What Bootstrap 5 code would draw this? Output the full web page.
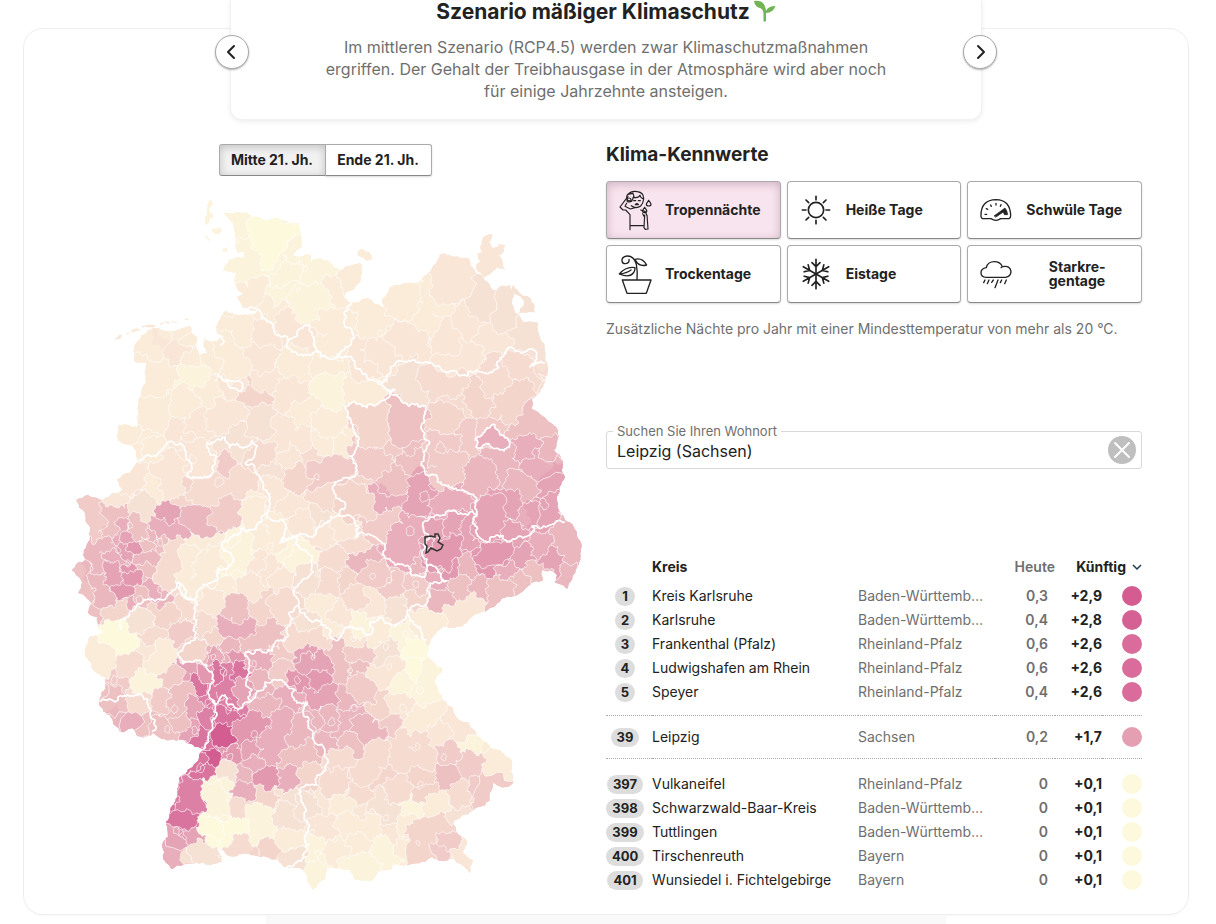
<!DOCTYPE html>
<html lang="de">
<head>
<meta charset="utf-8">
<meta name="viewport" content="width=device-width, initial-scale=1">
<title>Klimaszenarien für Deutschland</title>
<link href="https://cdn.jsdelivr.net/npm/bootstrap@5.3.0/dist/css/bootstrap.min.css" rel="stylesheet">
<style>
body{font-family:Inter,"Liberation Sans",sans-serif;color:#222;background:#fff;font-size:14px;padding:0 27px 0 23px;overflow-x:hidden}
.panel{border:1px solid #eee;border-radius:20px;margin-top:28px;padding-bottom:14px;box-shadow:0 1px 2px rgba(0,0,0,.03)}
.slide{max-width:752px;margin-top:-29px;padding:0 80px 17px;border:1px solid #f1f1f1;border-top:0;border-radius:0 0 12px 12px;box-shadow:0 2px 5px rgba(0,0,0,.07)}
.slide h2{font-size:21px;line-height:24px;font-weight:700;margin-bottom:12px}
.slide p{font-size:16px;line-height:22px;color:#6f6f6f;max-width:580px}
.arrow{position:absolute;top:35px;width:34px;height:34px;border-radius:50%;border:1px solid #aaa;background:#fff;box-shadow:0 1px 2px rgba(0,0,0,.3)}
.arrow-prev{left:-16px}.arrow-next{right:-16px}
.main-grid{padding-top:24px}
.map-side{padding:0 16px 0 36px}
.data-side{padding-right:46px}
.switch .btn{width:107px;height:32px;border:1px solid #aaa;border-bottom-color:#888;border-radius:3px;font-size:14px;line-height:20px;font-weight:700;color:#222;padding:0;background:#fff;box-shadow:0 1px 2px rgba(0,0,0,.15)}
.switch .btn.active{background:#f1f1f1;box-shadow:inset 0 2px 8px rgba(0,0,0,.2)}
.map{margin-top:14px;width:100%}
h3.section-title{font-size:19px;line-height:22px;font-weight:700;margin-bottom:15px}
.tiles{display:grid;grid-template-columns:repeat(3,1fr);gap:6px}
.tile{height:58px;border:1px solid #aaa;border-bottom-color:#888;border-radius:4px;background:#fff;padding:0 7px;color:#222;font-size:14px;line-height:14px;font-weight:700;box-shadow:0 1px 2px rgba(0,0,0,.15)}
.tile.active{background:#f8e4ee;box-shadow:inset 0 2px 10px rgba(60,0,30,.22),0 1px 2px rgba(0,0,0,.15)}
.tile-icon{width:42px;margin-right:9px;flex:none;display:flex;justify-content:center}
.tile-icon svg,.arrow svg,.reset svg{fill:none;stroke:#222;stroke-linecap:round;stroke-linejoin:round}
.tile-text{margin:0 auto;padding-right:6px}
.hint{font-size:14px;line-height:20px;color:#6f6f6f;margin:16px 0 84px}
.place{border:1px solid #d8d8d8;border-radius:3px;padding:0 5px 0 10px;height:46px;margin-bottom:86px}
.place legend{float:none;width:auto;font-size:13px;line-height:16px;color:#6f6f6f;padding:0 4px;margin:0 0 0 -4px}
.place-row{margin-top:-3px}
.place input{border:0;outline:0;background:none;font-size:16px;line-height:20px;color:#222;padding:2px 0 0;width:100%}
.reset{border:0;padding:0;width:28px;height:28px;border-radius:50%;background:#bfbfbf;flex:none}
.reset svg{stroke:#fff}
.rank{table-layout:fixed;width:100%;line-height:24px}
.rank td,.rank th{padding:0;white-space:nowrap;height:24px}
.rank th{height:29px;padding-bottom:5px;font-weight:700}
.rank .state{color:#6f6f6f}
.rank .now{color:#6f6f6f;font-weight:600;text-align:right;padding-right:7px}
.rank th.now{padding-right:0}
.rank .next{font-weight:700;text-align:right}
.rank .place-no{text-align:center;padding-right:8px;line-height:0;vertical-align:middle}
.pill{display:inline-block;background:#ddd;border-radius:10px;font-size:13px;line-height:19px;min-width:20px;padding:0 6px;font-weight:700}
.dot{display:block;width:20px;height:20px;border-radius:50%;margin-left:auto}
.own td{border-top:1px dotted #aaa;border-bottom:1px dotted #aaa;height:43px}
.rank .group-end td{padding-bottom:11px}
.rank .group-start td{padding-top:13px}
.sort{border:0;background:none;padding:0;font-weight:700;color:#222;display:inline-flex;align-items:center;gap:6px}
.next-part{max-width:680px;height:10px;background:#f9f9f9}
</style>
</head>
<body>
<main class="panel">
  <header class="slide position-relative bg-white mx-auto text-center">
    <h2 class="d-flex justify-content-center gap-1">Szenario mäßiger Klimaschutz
      <svg width="22" height="22" viewBox="0 0 22 22" aria-hidden="true"><path d="M9.500 21V13Q9 9 6 8 1 7 0 1 9 0 11 6.500 12 9 12 11 14 6 21.500 6 19 13 12 13V21Q11 22.500 9.500 21Z" fill="#70b455"/></svg></h2>
    <p class="mx-auto mb-0">Im mittleren Szenario (RCP4.5) werden zwar Klimaschutzmaßnahmen ergriffen. Der Gehalt der Treibhausgase in der Atmosphäre wird aber noch für einige Jahrzehnte ansteigen.</p>
    <button class="arrow arrow-prev d-flex align-items-center justify-content-center p-0" type="button" aria-label="Vorheriges Szenario"><svg width="16" height="16" stroke-width="2" viewBox="0 0 16 16"><path d="M10 2 4 8l6 6"/></svg></button>
    <button class="arrow arrow-next d-flex align-items-center justify-content-center p-0" type="button" aria-label="Nächstes Szenario"><svg width="16" height="16" stroke-width="2" viewBox="0 0 16 16"><path d="m6 2 6 6-6 6"/></svg></button>
  </header>

  <div class="row g-0 main-grid">
    <div class="col-6 map-side">
      <div class="text-center"><div class="btn-group switch" role="group" aria-label="Zeitraum">
        <button class="btn active" type="button">Mitte 21. Jh.</button>
        <button class="btn" type="button">Ende 21. Jh.</button>
      </div></div>
      <svg class="map d-block" id="map" viewBox="60 190 530 710" role="img" aria-label="Karte der Kreise in Deutschland"></svg>
    </div>

    <div class="col-6 data-side">
      <h3 class="section-title">Klima-Kennwerte</h3>
      <div class="tiles">
        <button class="tile active d-flex align-items-center text-start" type="button"><span class="tile-icon"><svg width="34" height="41" viewBox="54 57 102 123" stroke-width="3.5"><path d="M84 76 60 108l9 9h8l13 14v45M80 97l-5 9 16 8 14-4M122 117l14 5 5 12M91 164h41M134 132l-2 38 4 5 8-1-3-42M128 128l4 8"/><path d="M84 70q11-12 28-8 20 3 19 22-1 12-9 21-14 10-28-1M83 70l16-3 3 9-7 15-12-3-3-12zM99 79q17 3 21-6 2 8 9 10M101 89h6M115 89h6M106 101q5-6 9 0z"/><circle cx="87" cy="87" r="6"/><path d="M146 88q-14 17 0 17t0-17M134 109q-13 16 0 16t0-16"/></svg></span>Tropennächte</button>
        <button class="tile d-flex align-items-center text-start" type="button"><span class="tile-icon"><svg width="30" height="30" viewBox="0 0 90 90" stroke-width="5"><circle cx="45" cy="45" r="23"/><path d="M45 4v10M45 76v10M4 45h11M75 45h11M15 15l8 8M67 67l8 8M15 75l8-8M67 23l8-8"/></svg></span>Heiße Tage</button>
        <button class="tile d-flex align-items-center text-start" type="button"><span class="tile-icon"><svg width="32" height="24" viewBox="300 84 96 72" stroke-width="4"><path d="M307 146q-5-3-4-10 0-46 45-47 43 1 44 48 0 6-5 9h-25q-14 10-29 0z"/><path d="M315 133h5M319 116l4 2M332 105l2 4M348 100v5M363 104l-2 5"/><path d="M343 137l32-23q7 8 8 20h-10l-3-8-22 15z" fill="#222" stroke-width="2"/></svg></span>Schwüle Tage</button>
        <button class="tile d-flex align-items-center text-start" type="button"><span class="tile-icon"><svg width="34" height="41" viewBox="54 250 102 123" stroke-width="4"><path d="M67 328h86l-14 40H81zM111 326q2-24-2-45-7-26-28-25-17 3-15 15 2 9 11 8 12-2 10-13M105 266q22-6 35 17-23 6-33-13M105 291q-26-5-47 19 34 14 45-8 2-5 2-11M58 310q22-2 35-12"/></svg></span>Trockentage</button>
        <button class="tile d-flex align-items-center text-start" type="button"><span class="tile-icon"><svg width="30" height="32" viewBox="0 0 90 96" stroke-width="5"><path id="arm" d="M45 48V4M45 26 33 14M45 26 57 14"/><use href="#arm" transform="rotate(60 45 48)"/><use href="#arm" transform="rotate(120 45 48)"/><use href="#arm" transform="rotate(180 45 48)"/><use href="#arm" transform="rotate(240 45 48)"/><use href="#arm" transform="rotate(300 45 48)"/></svg></span>Eistage</button>
        <button class="tile d-flex align-items-center text-start" type="button"><span class="tile-icon"><svg width="34" height="29" viewBox="296 271 102 87" stroke-width="4"><path d="M317 323q-15-1-15-14 0-12 16-15 4-18 24-18 18 0 24 15 24-5 26 15-1 15-16 17zM366 291l-4 3M314 331l-4 8M326 331l-5 11M339 331l-5 7M353 331l-9 23M364 331l-4 8M378 331l-5 11"/></svg></span><span class="tile-text">Starkre-<br>gentage</span></button>
      </div>
      <p class="hint">Zusätzliche Nächte pro Jahr mit einer Mindesttemperatur von mehr als 20 °C.</p>
      <fieldset class="place">
        <legend><label for="ort">Suchen Sie Ihren Wohnort</label></legend>
        <div class="place-row d-flex align-items-center"><input id="ort" type="text" value="Leipzig (Sachsen)"><button class="reset" type="button" aria-label="Eingabe löschen"><svg class="d-block" width="28" height="28" stroke-width="2" viewBox="0 0 28 28"><path d="m7 7 14 14M21 7 7 21"/></svg></button></div>
      </fieldset>
      <table class="rank">
        <colgroup><col style="width:46px"><col><col style="width:137px"><col style="width:60px"><col style="width:47px"><col style="width:40px"></colgroup>
        <thead><tr><th></th><th>Kreis</th><th></th><th class="now">Heute</th><th colspan="2" class="next"><button class="sort" type="button">Künftig<svg width="10" height="7" viewBox="0 0 10 7" fill="none" stroke="#1d3a55" stroke-width="1.5"><path d="m1 1 4 4 4-4"/></svg></button></th></tr></thead>
        <tbody id="rows"></tbody>
      </table>
    </div>
  </div>
</main>
<div class="next-part mx-auto"></div>

<script>
// Ranking: place, district, state, today, future, colour
const ranking = [
 [1,'Kreis Karlsruhe','Baden-Württemb…','0,3','+2,9','#d45c91'],
 [2,'Karlsruhe','Baden-Württemb…','0,4','+2,8','#d56094'],
 [3,'Frankenthal (Pfalz)','Rheinland-Pfalz','0,6','+2,6','#d96c9b'],
 [4,'Ludwigshafen am Rhein','Rheinland-Pfalz','0,6','+2,6','#d96c9b'],
 [5,'Speyer','Rheinland-Pfalz','0,4','+2,6','#d96c9b','group-end'],
 [39,'Leipzig','Sachsen','0,2','+1,7','#e59fb3','own'],
 [397,'Vulkaneifel','Rheinland-Pfalz','0','+0,1','#fdf9dc','group-start'],
 [398,'Schwarzwald-Baar-Kreis','Baden-Württemb…','0','+0,1','#fdf9dc'],
 [399,'Tuttlingen','Baden-Württemb…','0','+0,1','#fdf9dc'],
 [400,'Tirschenreuth','Bayern','0','+0,1','#fdf9dc'],
 [401,'Wunsiedel i. Fichtelgebirge','Bayern','0','+0,1','#fdf9dc']];
document.getElementById('rows').innerHTML = ranking.map(r =>
 `<tr class="${r[6]||''}"><td class="place-no"><span class="pill">${r[0]}</span></td><td>${r[1]}</td><td class="state">${r[2]}</td><td class="now">${r[3]}</td><td class="next">${r[4]}</td><td><span class="dot" style="background:${r[5]}"></span></td></tr>`).join('');

// Colour scale, low to high
const scale = {a:'#fdf9dc',b:'#fcf3dc',c:'#faecd9',d:'#f9e6d7',e:'#f6e2d5',f:'#f6dbd0',g:'#f4d5cc',h:'#f1cbc8',i:'#edc0c2',j:'#eab7bf',k:'#e8aebb',l:'#e5a4b5',m:'#e299b0',n:'#dd80a5',o:'#d9749f',p:'#d35c91'};
const pts = s => s.trim().split(/\s+/).map(p => p.split(',').map(Number));

const coast = pts(`224,213 247,213 252,217 267,221 277,218 290,224 298,223 301,233 302,240 301,248 293,255 310,254 311,262 320,258 330,262 340,270 350,266 360,263 361,280 345,293 344,298 350,302 368,298 375,304 383,307 383,298 390,287 400,285 417,283 430,272 440,254 463,258 469,258 475,272 485,280 493,290 510,285 514,294 512,304 515,313 523,322 538,323 540,337 545,360 548,368 545,382 540,392 532,398 531,408 547,420 558,430 557,442 554,450 563,462 565,477 557,500 565,520 577,532 581,550 575,573 567,589 555,583 557,575 552,571 542,570 543,580 520,593 503,598 496,605 480,613 467,623 443,627 433,637 429,645 427,655 442,668 442,672 435,682 443,700 457,718 468,722 477,735 490,747 500,750 512,760 513,783 507,787 493,783 490,800 478,807 453,823 462,837 467,843 463,853 473,860 470,873 457,863 453,858 443,861 432,857 422,862 393,865 390,870 378,872 373,880 355,880 350,870 327,868 325,880 313,890 307,882 305,873 300,868 287,868 260,857 227,855 217,848 222,862 210,865 183,865 172,869 163,858 168,837 166,822 175,802 179,778 197,762 203,749 187,743 160,738 153,733 150,736 137,736 132,728 120,732 110,715 99,705 100,698 106,677 93,670 86,657 85,650 90,637 103,632 98,627 97,617 88,613 92,603 78,593 82,582 72,570 85,560 83,555 90,540 90,527 85,513 76,500 88,495 103,500 123,490 117,480 138,462 136,452 118,440 117,437 119,425 137,427 138,410 146,383 147,363 134,361 137,342 148,330 190,326 192,333 197,337 195,345 200,355 207,353 204,338 217,342 223,336 217,333 218,322 225,311 242,315 255,314 258,311 242,308 237,297 243,294 235,285 237,273 223,270 228,262 243,258 245,252 237,253 235,237`);

const islands = [
 ['b','211,200 213,203 209,208 210,213 215,216 210,218 207,225 205,222 207,211'],['b','212,229 220,227 222,231 217,234 212,232'],['b','206,234 210,239 209,241 206,238'],['b','222,249 228,247 227,251 223,252'],
 ['c','357,251 362,249 369,252 373,259 367,261 358,256'],
 ['d','477,254 482,252 480,247 482,240 487,235 492,234 489,242 494,248 499,244 505,245 504,252 499,256 503,262 505,270 497,267 493,272 486,277 478,272 476,265 480,262'],['e','511,284 520,293 535,307 535,313 518,314 524,304 514,294'],
 ['d','115,338 122,335 120,339 116,340'],['c','127,333 141,330 140,331 127,335'],['d','142,326 155,325 155,327 142,328'],['d','160,324 169,322 169,324 160,325'],['c','171,321 181,320 180,321 171,322'],['c','184,319 189,319 188,320']];

// One seed per district: x,y,colour
const seeds = `240,230,b 250,250,b 277,237,b 267,255,b 290,228,b 250,290,c 247,262,b 285,270,b 297,250,b 280,287,b 322,272,b 308,305,b 272,308,c 287,327,d 303,342,d 335,290,c 327,322,c 332,342,c
350,277,c 324,297,b 337,327,c 370,317,c 398,292,c 420,310,c 437,300,c 428,325,c 457,275,d 387,347,d 363,357,d 410,340,d 447,333,d 470,323,d 487,340,d 460,355,d 487,303,e 507,310,e 527,337,e 536,350,e 413,383,e 447,387,f 457,403,f 477,397,g 520,367,f 500,377,f 533,380,f 507,407,g 517,395,g 540,420,i 527,433,i 447,423,g 367,423,g 403,417,i 407,437,i 492,437,h 527,450,k 330,390,b 360,390,c 330,423,c 343,443,c 447,443,h 467,440,h
150,345,c 170,337,d 180,350,d 187,335,c 190,355,c 160,373,c 190,373,b 212,357,c 237,330,c 227,350,c 233,367,c 270,333,d 260,353,d 267,377,d 230,383,d 253,392,g 297,363,c 330,364,c 290,393,d 153,403,c 157,423,c 143,445,c 128,433,c 185,403,c 210,393,c 227,417,d 180,433,d 200,423,d 257,420,e 240,437,e 307,417,c 280,437,d 300,445,d
153,452,c 167,467,d 130,477,d 113,493,d 150,493,c 168,488,d 203,463,d 193,455,d 230,453,e 227,468,h 257,457,f 240,483,f 203,490,f 220,483,f 183,495,g 147,510,e 90,507,h 97,525,h 113,513,i 230,510,h 203,523,j 190,518,j 168,517,l 160,527,k 175,527,k 253,510,c 273,530,c 260,535,c 267,473,e 297,473,g 273,493,d 293,507,d 293,453,d 313,457,f 317,475,h 323,493,f 320,513,e 300,520,d 333,470,h 323,443,c
97,537,h 107,530,i 90,550,j 103,543,j 87,570,j 100,560,j 118,533,k 127,537,l 137,530,i 135,550,m 113,557,k 123,550,l 115,565,l 123,563,k 128,558,l 137,560,j 148,557,j 147,549,i 148,537,j 160,543,i 130,567,m 117,580,l 132,577,m 123,590,m 145,570,i 100,587,j 85,593,i 107,600,j 93,610,i 110,615,g 123,603,g 134,603,k 140,598,i 153,590,k 162,592,j 173,547,f 170,563,f 160,573,f 167,583,f 203,540,c 187,557,c 210,556,c 200,573,c 183,575,c 193,590,c 237,553,b 247,543,b 230,570,b 267,567,d 256,560,d 290,550,b 277,540,c 303,560,b 323,533,d 330,557,f 225,587,c 250,587,d 287,583,d 310,582,e 333,580,f 263,607,g 290,607,f 210,603,d 235,608,i 323,603,c 310,623,e 205,627,f 217,637,g 183,637,h 183,607,f 163,613,g 140,620,e 150,633,f 124,642,a 116,634,a 100,653,c 143,650,d 163,653,c 130,665,f 240,628,k 227,627,k 270,635,i 250,643,i 297,637,f 193,652,g 207,653,j 230,647,j 280,655,h 317,638,f 329,623,c
98,665,c 115,685,h 148,683,b 157,665,c 170,677,h 185,692,i 187,669,l 197,682,o 205,673,m 217,672,o 225,670,n 238,672,o 213,657,l 233,657,m 223,655,k 227,690,n 242,690,l 257,683,j 260,663,k 280,672,h 300,683,m 312,667,l 310,655,l 317,680,m 323,663,l 343,667,i 360,670,i 353,653,h 383,657,e 380,675,d 393,667,d 413,655,a 423,670,a 403,685,b 427,690,b 363,687,h 327,697,l 311,697,l 350,700,j 355,712,j 377,707,g 400,705,d 427,713,c 413,727,c 453,727,d 437,735,d 290,697,k 263,707,j 280,723,k 300,730,j 257,727,m 240,733,m 270,742,k 220,737,o 230,720,o 220,713,o 236,706,n 222,700,n 208,697,n 208,717,n 195,707,l 173,710,i 160,702,h 140,702,f 115,707,i 120,722,j 133,723,k 147,725,i 167,730,i 177,720,i 193,730,l 207,732,o 200,742,o 213,746,o 212,756,p 230,757,m 227,748,m 252,752,l 270,757,k 307,753,i 290,762,i 205,770,o 200,761,o 190,787,n 193,803,n 183,819,o 195,818,o 173,829,l 175,842,l 197,837,l 187,829,m 175,856,k 200,855,e 227,773,e 243,773,j 243,790,k 253,765,k 265,777,m 287,777,k 305,775,g 262,795,g 287,795,e 210,787,b 222,790,b 220,807,b 207,825,a 220,837,a 240,807,f 235,829,a 258,816,b 262,832,b 290,820,e 243,849,f 270,851,g 287,840,c 293,862,e
325,720,j 313,718,j 341,726,j 327,743,j 360,723,j 370,735,j 350,745,i 390,725,h 417,742,f 400,740,f 447,750,h 472,743,b 497,763,c 470,763,h 497,779,h 480,793,h 447,777,i 423,775,g 407,757,f 427,757,f 377,753,f 340,762,f 367,770,f 383,780,g 333,782,f 360,795,f 397,791,f 423,791,g 460,793,f 377,802,e 413,806,b 437,806,c 453,812,e 343,802,c 320,800,d 310,807,e 323,827,d 353,827,c 372,825,c 366,812,d 388,817,e 407,825,c 390,832,d 423,832,g 420,849,g 447,837,h 437,850,h 443,823,g 463,843,d 463,863,d 360,845,c 337,853,c 317,853,b 317,875,b 383,850,b 363,867,b 403,852,c
377,460,h 363,447,h 387,447,h 413,462,i 397,477,i 450,463,h 438,453,h 443,477,h 483,473,j 507,473,j 520,487,j 537,460,k 552,472,k 550,452,j 497,457,j 393,497,k 383,503,k 417,503,l 423,487,l 453,500,k 437,510,k 350,493,g 353,505,g 377,523,h 390,517,h 407,527,k 400,543,k 403,557,k 417,567,j 497,517,l 508,505,l 492,530,l 523,517,k 515,532,l 548,510,l 535,517,l 553,490,l 470,533,l 453,525,l 433,527,l 450,550,m 453,567,m 433,560,m 497,553,m 487,563,m 537,547,k 522,557,l 553,560,l 567,550,j 570,573,j 567,535,j 470,570,j 477,587,j 510,569,k 517,582,i 500,585,i 533,577,i 435,577,k 440,597,j 463,587,i 470,605,d 453,618,d 423,620,c 417,583,h 417,597,g 393,583,h 370,573,h 363,560,j 353,541,f 337,560,f 345,580,g 353,597,f 370,603,d 397,607,e 340,613,d 343,528,d 363,622,b 377,635,c 353,640,d 402,637,b 413,650,a 387,649,e 363,651,h 337,655,i 327,590,f`
 .trim().split(/\s+/).map((s, i) => { const [x,y,c] = s.split(','); return [+x,+y,c,i]; });

// Districts with an outline of their own
const shapes = [
 ['a','252,214 267,219 277,216 290,222 303,221 303,235 285,250 275,262 268,271 261,270 262,255 250,232'],
 ['k','475,438 485,430 495,425 500,435 509,441 504,451 490,446 476,447'],
 ['i','385,400 390,391 402,402 417,404 425,406 422,430 424,440 405,448 391,440 388,425'],
 ['g','345,408 355,402 385,400 388,425 391,440 375,447 355,443 353,425'],
 ['b','245,530 253,535 255,558 245,576 220,577 228,564 222,548 240,541'],
 ['c','243,500 256,495 267,497 267,515 257,530 243,524'],
 ['p','212,742 212,730 217,723 233,728 238,740 225,748 213,746'],
 ['n','185,772 200,778 205,785 203,800 207,812 200,814 174,811 178,790'],
 ['o','172,811 200,814 196,826 164,821'],
 ['a','198,817 210,816 218,820 225,835 220,846 210,835 197,830'],
 ['b','204,781 217,780 233,793 228,797 230,815 220,818 206,812 203,800'],
 ['m','434,537 440,541 450,532 462,535 462,552 452,560 450,573 440,565 424,563 425,551'],
 ['m','481,541 512,541 512,555 503,565 483,569'],
 ['g','335,482 353,480 365,483 375,497 378,513 353,518 338,514 333,490']
];

const borders = [
 '242,308 260,311 268,322 277,335 288,342 295,337 303,328 310,325 312,335 318,352 303,356 292,352 288,342','316,350 328,358 337,357',
 '352,303 344,313 344,321 352,330 354,338 337,355 355,362 362,372 377,381 387,380 387,375 415,360 430,363 445,372 467,376 477,370 490,372 500,358 512,348 525,352 537,353 530,367 545,363',
 '377,381 395,390 388,391','428,440 422,430 425,406 417,404 402,402 390,391 385,400 355,402 345,408 353,425 358,443 357,470 352,477 335,482 333,490 338,515 327,523 300,533 280,543',
 '428,440 425,473 443,485 463,490 477,500 477,513 458,514 423,523 422,553 427,567 440,573 447,581 430,583 427,590 427,603 415,605 407,612 415,625 427,640','477,513 480,538 497,535 507,541 523,538 532,526 548,526 565,522',
 '338,515 353,518 355,537 375,537 382,543 382,555 395,565 412,575 425,577 427,567','475,438 485,430 495,425 500,435 509,441 504,451 490,446 476,447 475,438',
 '407,612 405,620 380,617 370,622 370,635 355,628 345,628 340,637 335,640 325,625 305,613 298,605',
 '138,462 153,456 167,442 185,450 188,460 187,477 200,477 213,472 217,457 208,448 207,443 225,437 230,448 245,447 252,440 245,463 255,470 263,488 270,497 267,513 280,520 280,543 297,537 302,550 312,560 310,575 302,580 298,605 290,625 278,640 272,652',
 '217,375 225,381 243,384 241,391 230,388 222,378','220,345 224,342 223,336',
 '267,513 260,522 247,532 240,528 222,548 232,556 232,563 218,568 218,578 200,588 195,600 178,582 170,593 150,600 130,612 120,620 120,630',
 '178,582 185,595 197,605 197,620 193,630 195,640 178,655 183,664 200,660 207,665 210,685 213,700 217,715 212,730 203,749',
 '213,700 218,703 225,695 228,705 238,710 250,702 252,690 247,680 246,652 260,650 272,650',
 '250,702 263,690 265,682 282,680 288,687 295,690 297,703 307,702 308,725 315,743 325,750 326,770 317,775 317,785 300,795 305,808 308,830 307,850 297,862 280,865',
 '99,701 115,702 135,695 148,700 150,713 155,720 152,732'].map(pts);

// Town districts that lie inside a rural one: x,y,radius
const towns = '193,459,5 219,482,6 139,600,5 317,477,4 270,546,5 318,574,4 410,531,5 424,496,6 544,504,6 441,448,7 373,576,4 389,580,4 416,584,5 114,680,5 175,709,5 167,730,4 195,730,5 213,657,4 224,672,5 230,757,5 201,768,6 178,831,6 254,734,5 254,664,4 297,680,4 313,657,3 350,671,4 389,667,4 420,690,5 403,708,5 332,722,6 354,708,4 418,746,4 444,757,4 420,785,5 318,853,4 335,840,3 418,843,3 386,818,4 386,647,4 406,634,4 353,638,4 305,269,4 298,290,3 380,333,4 401,280,4 130,525,4 118,550,4 128,563,4 160,542,4 208,702,4 212,719,3 228,711,4 312,832,3'.split(' ').map(s => s.split(',').map(Number));

// Fractal line between two points; the same pair always gives the same line
const noise = n => { const v = Math.sin(n) * 43758.5453; return v - Math.floor(v) - .5; };
function rough(a, b, k) {
  const swap = a[0] > b[0] || (a[0] === b[0] && a[1] > b[1]);
  const [p, q] = swap ? [b, a] : [a, b], out = [p];
  (function split(p, q, d) {
    const dx = q[0]-p[0], dy = q[1]-p[1];
    if (d > 3 || dx*dx+dy*dy < 7) { out.push(q); return; }
    const o = noise(Math.round(p[0])*12.9 + Math.round(p[1])*78.2 + Math.round(q[0])*37.7 + Math.round(q[1])*9.1 + d) * k;
    const m = [(p[0]+q[0])/2 - dy*o, (p[1]+q[1])/2 + dx*o];
    split(p, m, d+1); split(m, q, d+1);
  })(p, q, 0);
  return swap ? out.reverse() : out;
}
function line(points, k, closed) {
  const res = [], n = points.length;
  for (let i = 0; i < (closed ? n : n-1); i++) res.push(...rough(points[i], points[(i+1)%n], k));
  return 'M' + res.map(p => p[0].toFixed(1)+' '+p[1].toFixed(1)).join('L') + (closed ? 'Z' : '');
}
// Cell of a seed: a box cut by the bisector to every neighbour.
// Each corner keeps the neighbour that lies behind the edge leaving it.
function cell(s) {
  let poly = [[s[0]-70,s[1]-70],[s[0]+70,s[1]-70],[s[0]+70,s[1]+70],[s[0]-70,s[1]+70]];
  for (const t of seeds) {
    if (t === s || Math.hypot(t[0]-s[0], t[1]-s[1]) > 190) continue;
    const nx = t[0]-s[0], ny = t[1]-s[1], c = (t[0]**2+t[1]**2-s[0]**2-s[1]**2)/2;
    const side = p => p[0]*nx + p[1]*ny - c, next = [];
    poly.forEach((p, i) => {
      const q = poly[(i+1)%poly.length], u = side(p), v = side(q);
      if (u <= 0) next.push(p);
      if (u*v < 0) { const f = u/(u-v); next.push([p[0]+(q[0]-p[0])*f, p[1]+(q[1]-p[1])*f, u < 0 ? t : p[2]]); }
    });
    poly = next;
  }
  return poly;
}
const shift = p => { const x = Math.round(p[0]*2)/2, y = Math.round(p[1]*2)/2; return [x + noise(x*7.3+y*3.1)*4, y + noise(x*2.7+y*8.9)*4]; };
const ring = ([x,y,r]) => Array.from({length:7}, (_, i) => { const a = i*.9, m = r*(.85+noise(x*3+y+i)*.5); return [x+Math.cos(a)*m*.8, y+Math.sin(a)*m]; });
let under = '', fills = '', edges = '';
for (const s of seeds) {
  const raw = cell(s), poly = raw.map(shift), colour = scale[s[2]];
  under += `<path d="${line(raw,0,true)}" fill="${colour}" stroke="${colour}"/>`;
  fills += `<path d="${line(poly,.8,true)}" fill="${colour}"/>`;
  raw.forEach((p, i) => {
    const t = p[2];
    if (!t || t[3] < s[3]) return;
    if (t[2] === s[2] && Math.hypot(t[0]-s[0], t[1]-s[1]) < 22 && noise(s[3]*5.1+t[3]) > -.1) return;
    edges += line([poly[i], poly[(i+1)%poly.length]], .8);
  });
}
document.getElementById('map').innerHTML =
 `<clipPath id="land"><path d="${line(coast,.3,true)}"/></clipPath><g clip-path="url(#land)" stroke-linejoin="round">` + under + fills +
 `<path d="${edges}" fill="none" stroke="#fff" stroke-opacity=".65"/>` +
 shapes.map(p => { const d = line(pts(p[1]),.6,true); return `<path d="${d}" fill="${scale[p[0]]}"/><path d="${d}" fill="none" stroke="#fff" stroke-opacity=".65"/>`; }).join('') +
 `<path d="${towns.map(t => line(ring(t),.5,true)).join('')}" fill="none" stroke="#fff" stroke-opacity=".6"/>` +
 `<path d="${borders.map(b => line(b,.6)).join('')}" fill="none" stroke="#fff" stroke-width="1.7"/></g>` +
 islands.map(i => `<path d="${line(pts(i[1]),.4,true)}" fill="${scale[i[0]]}"/>`).join('') +
 `<path d="M425 537L431 536 435 537 435 534 438 534 440 538 438 542 443 545 441 549 437 551 431 548 428 552 426 553 427 546 425 544Z" fill="none" stroke="#333" stroke-width="1.5"/>`;
</script>
<script src="https://cdn.jsdelivr.net/npm/bootstrap@5.3.0/dist/js/bootstrap.bundle.min.js"></script>
</body>
</html>
